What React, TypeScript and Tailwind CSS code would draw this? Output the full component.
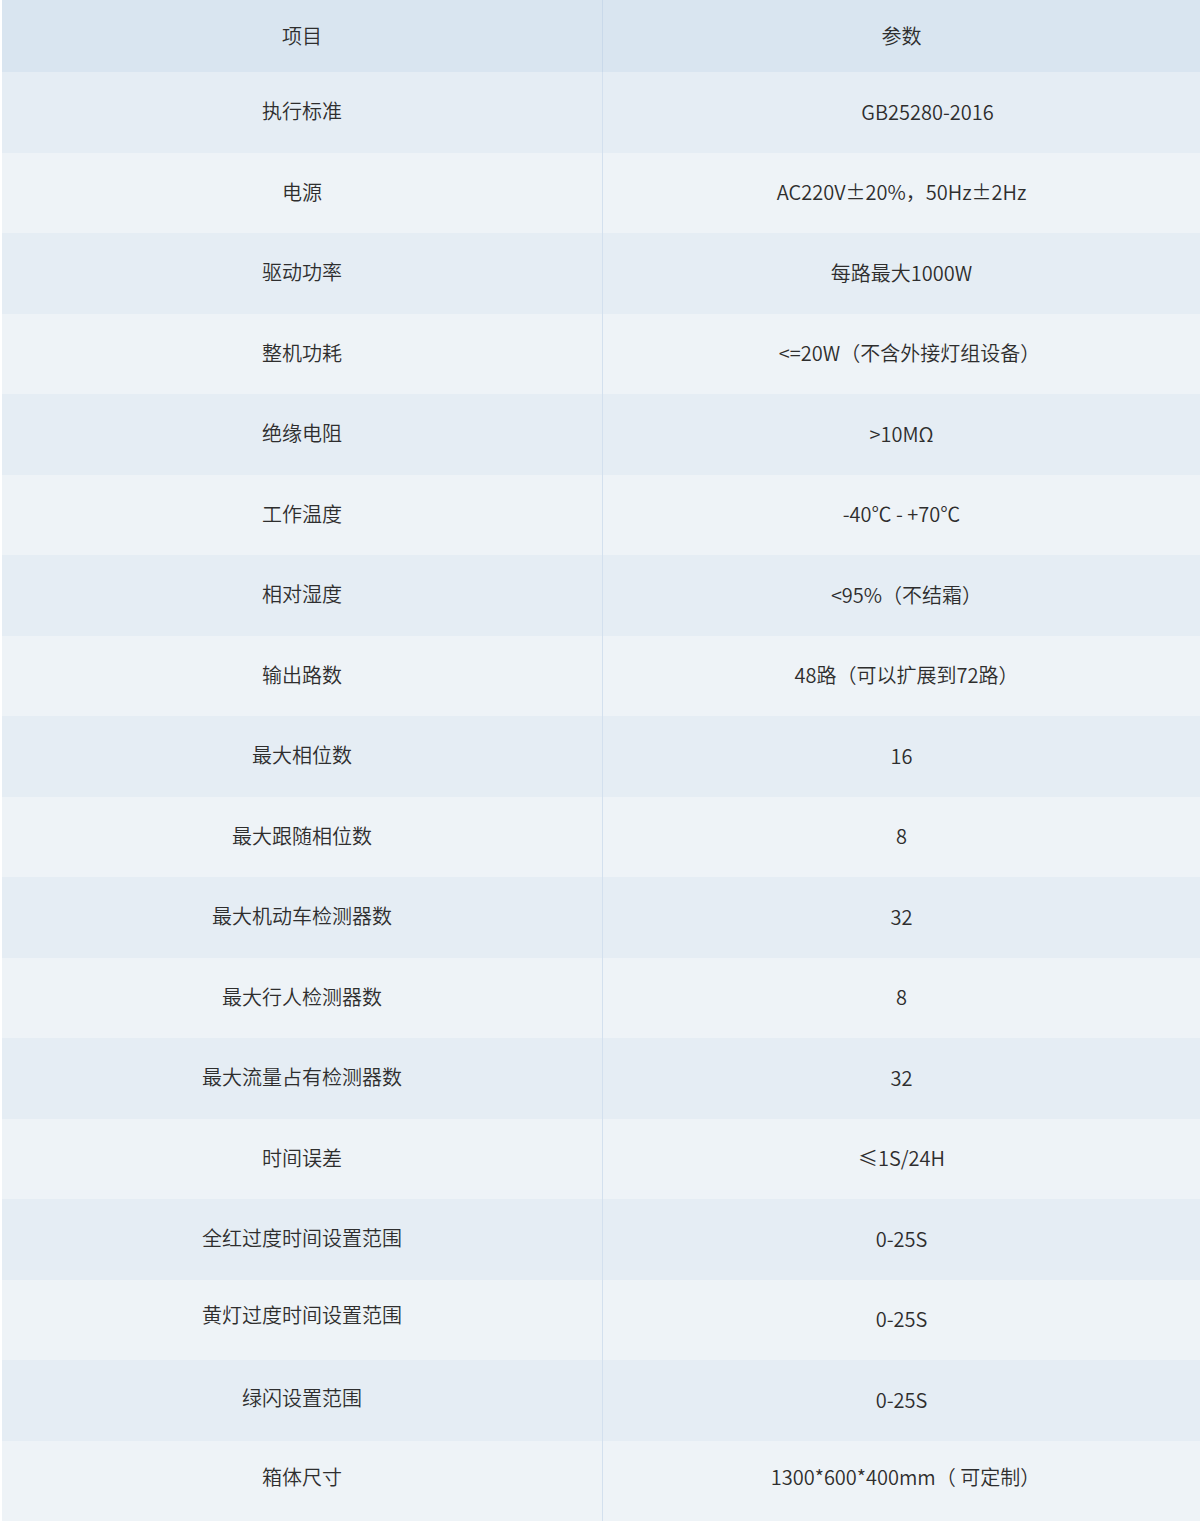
const rows: [string, string][] = [
  ['执行标准', 'GB25280-2016'],
  ['电源', 'AC220V±20%，50Hz±2Hz'],
  ['驱动功率', '每路最大1000W'],
  ['整机功耗', '<=20W（不含外接灯组设备）'],
  ['绝缘电阻', '>10MΩ'],
  ['工作温度', '-40℃ - +70℃'],
  ['相对湿度', '<95%（不结霜）'],
  ['输出路数', '48路（可以扩展到72路）'],
  ['最大相位数', '16'],
  ['最大跟随相位数', '8'],
  ['最大机动车检测器数', '32'],
  ['最大行人检测器数', '8'],
  ['最大流量占有检测器数', '32'],
  ['时间误差', '≤1S/24H'],
  ['全红过度时间设置范围', '0-25S'],
  ['黄灯过度时间设置范围', '0-25S'],
  ['绿闪设置范围', '0-25S'],
  ['箱体尺寸', '1300*600*400mm（ 可定制）'],
];

// small per-row horizontal nudges on the value column, as in the source page
const valuePad: Record<number, string> = {
  0: 'pl-[52px]',
  3: 'pl-[16px]',
  6: 'pl-[10px]',
  7: 'pl-[10px]',
  17: 'pl-[8px]',
};

export default function App() {
  return (
    <div
      className="w-[1200px] bg-white pl-[2px] text-[20px] font-[350] text-[#2e2e2e]"
      style={{ fontFamily: '"Noto Sans CJK SC", "Noto Sans", sans-serif' }}
    >
      <div className="grid grid-cols-[600px_1fr] h-[72px] bg-[#d9e5f0]">
        <div className="flex items-center justify-center pb-[1px]">项目</div>
        <div className="flex items-center justify-center pb-[1px] border-l border-[#c9d9ea]">参数</div>
      </div>
      {rows.map(([k, v], i) => (
        <div
          key={k}
          className={`grid grid-cols-[600px_1fr] h-[80.5px] ${i % 2 === 0 ? 'bg-[#e5edf4]' : 'bg-[#eef3f7]'}`}
        >
          <div
            className={`flex items-center justify-center ${i === 15 ? 'pb-[10px]' : i === 17 ? 'pb-[8px]' : i === 16 ? 'pb-[4px]' : 'pb-[2px]'}`}
          >
            {k}
          </div>
          <div
            className={`flex items-center justify-center border-l border-[#d3e0ee] ${i === 17 ? 'pb-[8px]' : 'pb-[1px]'} ${valuePad[i] ?? ''}`}
          >
            {v}
          </div>
        </div>
      ))}
    </div>
  );
}
